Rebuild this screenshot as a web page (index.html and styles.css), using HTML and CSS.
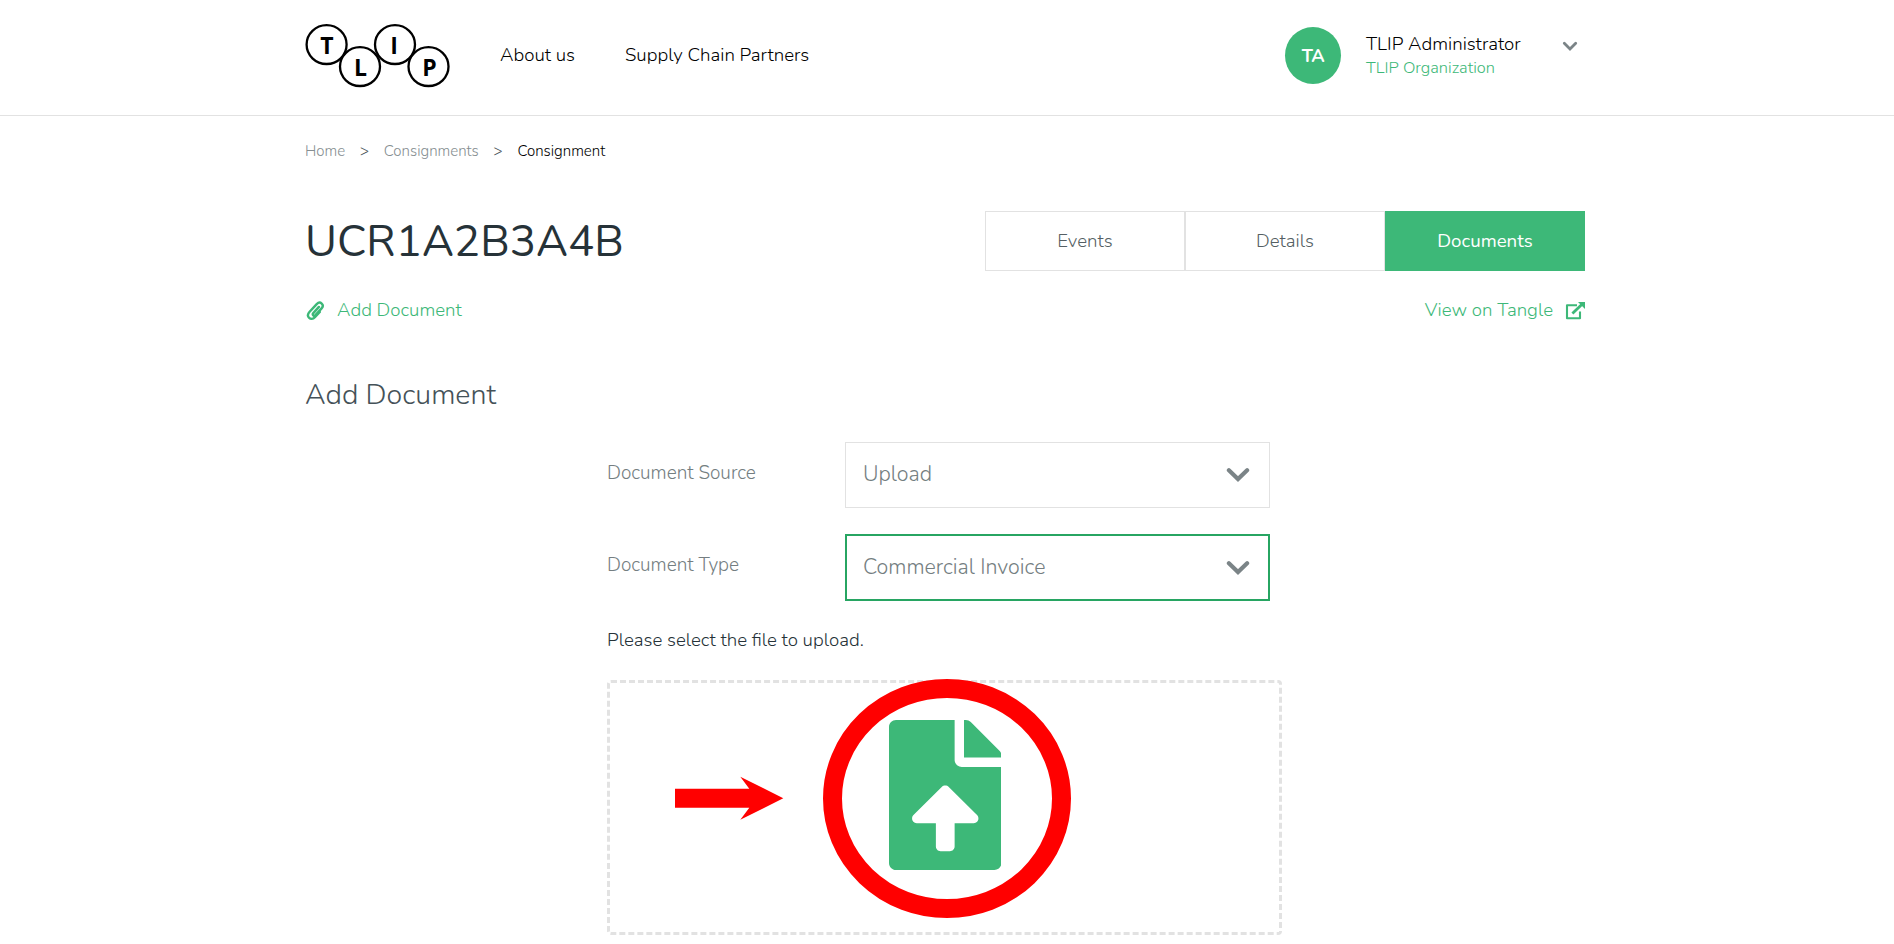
FILE: index.html
```html
<!DOCTYPE html>
<html lang="en">
<head>
<meta charset="utf-8">
<title>TLIP - Consignment</title>
<link rel="stylesheet" href="styles.css">
</head>
<body>
<header class="header">
  <div class="container header-inner">
    <svg class="logo" width="146" height="66" viewBox="0 0 146 66">
      <g fill="none" stroke="#000" stroke-width="2.3">
        <ellipse cx="21.6" cy="21.6" rx="20" ry="19.4"/>
        <ellipse cx="55" cy="43.6" rx="20" ry="19.4"/>
        <ellipse cx="90" cy="21.6" rx="20" ry="19.4"/>
        <ellipse cx="123.5" cy="43.6" rx="20" ry="19.4"/>
      </g>
      <g class="logo-text" text-anchor="middle">
        <text x="22" y="30.5">T</text>
        <text x="55.6" y="52.5">L</text>
        <text x="89.2" y="30.5" class="logo-bar">I</text>
        <text x="124.5" y="52.5">P</text>
      </g>
    </svg>
    <nav class="nav">
      <a class="nav-about">About us</a>
      <a class="nav-partners">Supply Chain Partners</a>
    </nav>
    <div class="user">
      <div class="avatar">TA</div>
      <div class="user-info">
        <div class="user-name">TLIP Administrator</div>
        <div class="user-org">TLIP Organization</div>
      </div>
      <svg class="user-chevron" width="16" height="12" viewBox="0 0 16 12"><path d="M2.3 3.2 8 8.9l5.7-5.7" fill="none" stroke="#7b8487" stroke-width="2.8" stroke-linecap="round"/></svg>
    </div>
  </div>
</header>
<main class="container">
  <div class="breadcrumb">
    <a>Home</a><span class="sep">&gt;</span><a>Consignments</a><span class="sep">&gt;</span><span class="crumb-current">Consignment</span>
  </div>
  <div class="title-row">
    <h1>UCR1A2B3A4B</h1>
    <div class="tabs">
      <button class="tab">Events</button>
      <button class="tab">Details</button>
      <button class="tab tab-active">Documents</button>
    </div>
  </div>
  <div class="links">
    <a class="link">
      <svg class="clip" width="19" height="21" viewBox="0 0 19 21"><path d="M12.9 5.9 7.3 12.1c-1.4 1.6.6 3.500 2.100 2l6.200-6.700c3.200-3.600-1.300-8-4.900-4.300L3.400 11c-3.900 4.400 1.500 9.500 5.500 5.200l4.900-5.300" fill="none" stroke="#3db878" stroke-width="2.4" stroke-linecap="round" stroke-linejoin="round"/></svg>
      <span>Add Document</span>
    </a>
    <a class="link">
      <span>View on Tangle</span>
      <svg class="external" width="20" height="18" viewBox="0 0 20 18"><g fill="none" stroke="#3db878"><path d="M12 3.200H2v13h13V9.600" stroke-width="2.1" stroke-linejoin="round"/><path d="M7.400 11.600 16.800 2.400" stroke-width="2.8"/></g><path d="M13 0h7v7z" fill="#3db878"/></svg>
    </a>
  </div>
  <h2>Add Document</h2>
  <form class="form">
    <div class="field">
      <label>Document Source</label>
      <div class="select"><span class="value">Upload</span><svg width="24" height="16" viewBox="0 0 24 16"><path d="M2.900 3.300 12 12l9.100-8.700" fill="none" stroke="#7b8487" stroke-width="4.200" stroke-linecap="round"/></svg></div>
    </div>
    <div class="field">
      <label>Document Type</label>
      <div class="select select-focus"><span class="value">Commercial Invoice</span><svg width="24" height="16" viewBox="0 0 24 16"><path d="M2.900 3.300 12 12l9.100-8.700" fill="none" stroke="#7b8487" stroke-width="4.200" stroke-linecap="round"/></svg></div>
    </div>
    <p class="hint">Please select the file to upload.</p>
    <div class="dropzone">
      <svg class="file-icon" width="112.5" height="150" viewBox="0 0 384 512"><path fill="#3db878" d="M224 136V0H24C10.700 0 0 10.700 0 24v464c0 13.300 10.700 24 24 24h336c13.300 0 24-10.700 24-24V160H248c-13.200 0-24-10.800-24-24zm65.180 216.010H224v80c0 8.840-7.160 16-16 16h-32c-8.840 0-16-7.160-16-16v-80H94.820c-14.280 0-21.410-17.290-11.270-27.360l96.420-95.700c6.650-6.610 17.390-6.610 24.040 0l96.420 95.700c10.150 10.070 3.030 27.360-11.250 27.360zM377 105L279.100 7c-4.500-4.500-10.600-7-17-7H256v128h128v-6.100c0-6.300-2.500-12.400-7-16.900z"/></svg>
      <svg class="highlight" width="400" height="240" viewBox="0 0 400 240">
        <path d="M0 109.700H74.300L65.300 97.700 108.300 119.300 65.300 140.700 74.300 128.700H0z" fill="#f00"/>
        <ellipse cx="272" cy="119.500" rx="114.500" ry="110" fill="none" stroke="#f00" stroke-width="19"/>
      </svg>
    </div>
  </form>
</main>
</body>
</html>
```
FILE: styles.css
```css
* { box-sizing: border-box; }
body {
  margin: 0;
  background: #fff;
  color: #263238;
  font: 350 18.7px/24px Nunito, Lato, "Open Sans", sans-serif;
  overflow: hidden;
}
.container { width: 1280px; margin: 0 auto; transform: translateX(-2px); }
.header { height: 116px; border-bottom: 1px solid #e2e2e2; }
.header-inner { display: flex; align-items: flex-start; }
.logo { margin-top: 23px; flex: none; }
.logo-text { font: bold 23px "Open Sans", sans-serif; }
.logo-bar { font-family: "Liberation Sans", sans-serif; font-size: 24px; }
.nav { display: flex; gap: 50px; margin: 43px 0 0 49px; color: #000; }
.user { display: flex; align-items: flex-start; margin-left: auto; padding-right: 7px; }
.avatar {
  width: 56px; height: 57px; margin-top: 27px;
  border-radius: 50%;
  background: #3db878; color: #fff;
  font-size: 18px; font-weight: bold; line-height: 58px; letter-spacing: -.4px; text-align: center;
}
.user-info { width: 195px; margin: 32px 0 0 25px; }
.user-name { color: #000; }
.user-org { color: #3db878; font-size: 16.4px; }
.user-chevron { margin: 40px 0 0 1px; }
.breadcrumb { display: flex; padding-top: 25px; font-size: 15px; line-height: 20px; color: #868e91; }
.crumb-current { color: #000; }
.sep { width: 38.7px; text-align: center; color: #444e52; }
.title-row { display: flex; justify-content: space-between; margin-top: 50px; }
h1 { margin: 0; font-size: 43.8px; font-weight: 400; line-height: 60px; padding-top: 1px; height: 60px; }
.tabs { display: flex; width: 600px; }
.tab {
  flex: 1; height: 60px; padding: 0;
  border: 1px solid #e2e2e2; background: #fff; color: #555f64;
  font: inherit;
}
.tab-active { border-color: #3db878; background: #3db878; color: #fff; font-weight: 400; }
.links { display: flex; justify-content: space-between; margin-top: 27px; color: #3db878; }
.link { display: flex; }
.clip { margin: 3px 12px 0 1px; }
.external { margin: 4px 0 0 12px; }
h2 { margin: 55px 0 29px; font-size: 28.6px; font-weight: 350; line-height: 36px; color: #455258; }
.form { width: 675px; margin-left: 302px; }
.field { display: flex; margin-bottom: 26px; }
.field label { width: 238px; line-height: 62px; color: #747e81; font-size: 19px; }
.select {
  display: flex; align-items: center; justify-content: space-between;
  width: 425px; height: 66px; padding: 0 19px 0 17px;
  border: 1px solid #e2e2e2; color: #747e81;
}
.select-focus { height: 67px; padding: 0 18px 0 16px; border: 2px solid #27a562; }
.value { font-size: 21.4px; line-height: 30px; padding-bottom: 2px; }
.hint { margin: 0 0 28px; padding-top: 1px; }
.dropzone { position: relative; height: 255px; border: 3px dashed #e2e2e2; border-radius: 4px; display: flex; justify-content: center; padding: 37px 0 0 1px; }
.highlight { position: absolute; left: 65px; top: -4px; }
```
